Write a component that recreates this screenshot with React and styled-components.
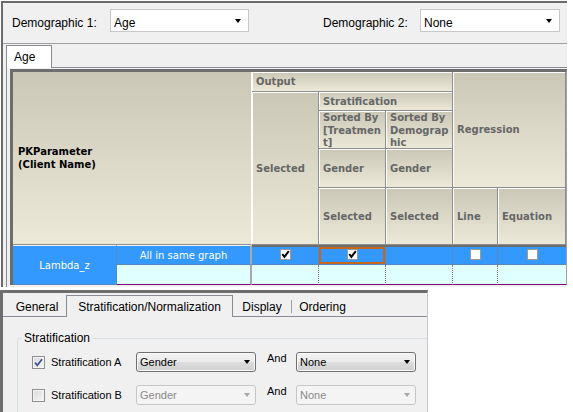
import React from 'react';
import styled, { createGlobalStyle } from 'styled-components';

const GlobalStyle = createGlobalStyle`
  html, body {
    margin: 0;
    padding: 0;
    background: #fff;
  }
  body {
    font-family: "Liberation Sans", Arial, sans-serif;
    font-size: 12px;
    color: #000;
  }
  * {
    box-sizing: border-box;
  }
`;

const Screen = styled.div`
  width: 573px;
  height: 412px;
  overflow: hidden;
  background: #fff;
`;

/* ---------- upper window ---------- */

const UpperWindow = styled.div`
  margin: 1px 0 0 1px;
  width: 566px;
  height: 286px;
  overflow: hidden;
  background: #f0f0f0;
  border-top: 2px solid #6b6b6b;
  border-left: 2px solid #6b6b6b;
  display: flex;
  flex-direction: column;
`;

const TopBar = styled.div`
  flex: none;
  height: 41px;
  display: flex;
  align-items: flex-start;
  padding: 6px 0 0 9px;
  border-bottom: 1px solid #a0a0a0;
`;

const FieldLabel = styled.div`
  width: ${p => p.w}px;
  margin-left: ${p => p.gap || 0}px;
  height: 23px;
  padding-top: 4px;
  display: flex;
  align-items: center;
  white-space: nowrap;
`;

const Combo = styled.div`
  width: ${p => p.w}px;
  height: 23px;
  background: #fff;
  border: 1px solid #c8c8c8;
  display: flex;
  align-items: center;
  padding: 4px 0 0 3px;
`;

const Arrow = styled.span`
  margin-left: auto;
  margin-right: ${p => p.right || 6}px;
  margin-top: ${p => p.lift || 0}px;
  width: 0;
  height: 0;
  border-left: 3.5px solid transparent;
  border-right: 3.5px solid transparent;
  border-top: 4px solid ${p => p.color || '#000'};
`;

const TabStrip = styled.div`
  flex: none;
  display: flex;
  margin: 1px 0 0 3px;
  height: 23px;
`;

const PageTab = styled.div`
  width: 46px;
  height: 23px;
  background: #fff;
  border: 1px solid #898c95;
  border-bottom: none;
  padding: 4px 0 0 7px;
  line-height: 14px;
`;

const StripRest = styled.div`
  flex: 1;
  border-bottom: 1px solid #898c95;
`;

const TabPage = styled.div`
  flex: 1;
  margin-left: 3px;
  border-left: 1px solid #898c95;
  padding: 1px 0 0 3px;
`;

const Grid = styled.div`
  width: 557px;
  display: grid;
  grid-template-columns: 104px 135px 67px 67px 67px 45px 68px;
  grid-template-rows: 20px 19px 38px 39px 57px 20px 20px;
  border-top: 3px solid #6d6d6d;
  border-left: 3px solid #6d6d6d;
  border-right: 1px solid #a0a0a0;
  background: #fff;
  font-family: "DejaVu Sans", Verdana, sans-serif;
  font-size: 10px;
`;

const Head = styled.div`
  grid-column: ${p => p.c};
  grid-row: ${p => p.r};
  background: linear-gradient(#cac7b7, #ece9d9);
  border-right: 1px solid ${p => (p.main ? '#fff' : '#8e8e8e')};
  border-bottom: 1px solid #8e8e8e;
  box-shadow: ${p => (p.main ? 'none' : 'inset 1px 1px 0 #fff')};
  display: flex;
  align-items: ${p => (p.top ? 'flex-start' : 'center')};
  padding: ${p => (p.top ? 1 : 2)}px 2px 0 ${p => (p.main ? 5 : 4)}px;
  font-weight: bold;
  color: ${p => (p.main ? '#000' : '#666')};
  line-height: 12.7px;
  white-space: nowrap;
`;

const Cell = styled.div`
  grid-column: ${p => p.c};
  grid-row: ${p => p.r};
  background: ${p => (p.alt ? '#e0ffff' : '#3399ff')};
  color: #fff;
  display: flex;
  align-items: center;
  justify-content: center;
  white-space: nowrap;
  border-top: ${p =>
    p.top === 'dark' ? '2px solid #6d6d6d' : p.top === 'light' ? '1px solid #f4f4f4' : 'none'};
  border-bottom: ${p => (p.purple ? '1px solid #800080' : '1px dotted #7a7a7a')};
  border-right: ${p =>
    p.edge === 'solid' ? '2px solid #a8a8a8' : p.edge === 'none' ? 'none' : '1px dotted #7a7a7a'};
  box-shadow: ${p => (p.focus ? 'inset 0 0 0 2px #c6671a' : 'none')};
`;

const GridCheck = styled.span`
  width: 11px;
  height: 11px;
  margin-top: -2px;
  background: #fff;
  border: 1px solid #9a9a9a;
  display: flex;
  align-items: center;
  justify-content: center;
`;

/* ---------- lower window ---------- */

const LowerWindow = styled.div`
  margin-top: 3px;
  width: 428px;
  height: 122px;
  overflow: hidden;
  background: #f0f0f0;
  border-top: 3px solid #6d6d6d;
  border-left: 3px solid #6d6d6d;
  border-right: 1px solid #c8c8c8;
`;

const LowerStrip = styled.div`
  display: flex;
  align-items: flex-end;
  height: 24px;
  padding-left: 5px;
  box-shadow: inset 0 -1px 0 #898c95;
`;

const LowerTab = styled.div`
  width: ${p => p.w}px;
  height: 22px;
  display: flex;
  align-items: center;
  justify-content: center;
  white-space: nowrap;
  background: ${p => (p.active ? '#f0f0f0' : 'transparent')};
  border: 1px solid ${p => (p.active ? '#898c95' : 'transparent')};
  border-bottom: none;
`;

const TabSep = styled.span`
  align-self: flex-start;
  margin-top: 7px;
  width: 1px;
  height: 13px;
  background: #a0a0a0;
`;

const Group = styled.fieldset`
  margin: 14px 0 0 14px;
  padding: 0 0 20px 4px;
  width: 440px;
  border: 1px solid #d5dfe5;
  border-radius: 3px;
  display: flex;
  flex-direction: column;
  gap: 13px;
`;

const GroupLabel = styled.legend`
  padding: 0 2px;
  font-size: 12px;
  line-height: 14px;
`;

const FieldRow = styled.div`
  display: flex;
  align-items: center;
  height: 20px;
  margin-left: 10px;
  font-size: 11px;
  &:first-of-type {
    margin-top: 7px;
  }
`;

const WinCheck = styled.span`
  width: 13px;
  height: 13px;
  flex: none;
  border: 1px solid #8e8f8f;
  background: linear-gradient(135deg, #d9d9d9, #f7f7f7);
  box-shadow: inset 0 0 0 1px #f4f4f4;
  display: flex;
  align-items: center;
  justify-content: center;
`;

const RowLabel = styled.span`
  width: 85px;
  margin-left: 6px;
  white-space: nowrap;
`;

const DropList = styled.div`
  width: 120px;
  height: 20px;
  flex: none;
  border: 1px solid ${p => (p.disabled ? '#c3c7ca' : '#707070')};
  border-radius: 3px;
  background: ${p =>
    p.disabled
      ? '#f4f4f4'
      : 'linear-gradient(#f2f2f2 0%, #ebebeb 50%, #dddddd 51%, #cfcfcf 100%)'};
  box-shadow: ${p => (p.disabled ? 'none' : 'inset 0 0 0 1px #fbfbfb')};
  color: ${p => (p.disabled ? '#8b8b8b' : '#000')};
  display: flex;
  align-items: center;
  padding-left: 3px;
  font-size: 11px;
`;

const AndText = styled.span`
  align-self: flex-start;
  width: 29px;
  margin-left: 11px;
  line-height: 13px;
`;

const Tick = () => (
  <svg width="9" height="9" viewBox="0 0 9 9">
    <polyline points="1.3,4.2 3.4,6.8 7.8,1.2" fill="none" stroke="#000" strokeWidth="2" />
  </svg>
);

const WinTick = () => (
  <svg width="11" height="11" viewBox="0 0 11 11">
    <polyline points="2,5.5 4.3,8.3 9,2.3" fill="none" stroke="#3d5493" strokeWidth="1.7" />
  </svg>
);

const StratRow = ({ label, checked, disabled }) => (
  <FieldRow>
    <WinCheck>{checked && <WinTick />}</WinCheck>
    <RowLabel>{label}</RowLabel>
    <DropList disabled={disabled}>
      Gender
      <Arrow right={5} color={disabled ? '#a8a8a8' : '#000'} />
    </DropList>
    <AndText>And</AndText>
    <DropList disabled={disabled}>
      None
      <Arrow right={5} color={disabled ? '#a8a8a8' : '#000'} />
    </DropList>
  </FieldRow>
);

const App = () => (
  <>
    <GlobalStyle />
    <Screen>
      <UpperWindow>
        <TopBar>
          <FieldLabel w={98}>Demographic 1:</FieldLabel>
          <Combo w={139}>
            Age
            <Arrow right={7} lift={-3} />
          </Combo>
          <FieldLabel w={97} gap={74}>Demographic 2:</FieldLabel>
          <Combo w={140}>
            None
            <Arrow right={7} lift={-3} />
          </Combo>
        </TopBar>

        <TabStrip>
          <PageTab>Age</PageTab>
          <StripRest />
        </TabStrip>

        <TabPage>
          <Grid>
            <Head c="1 / 3" r="1 / 6" main>
              PKParameter
              <br />
              (Client Name)
            </Head>
            <Head c="3 / 6" r="1">Output</Head>
            <Head c="6 / 8" r="1 / 5">Regression</Head>
            <Head c="3" r="2 / 6">Selected</Head>
            <Head c="4 / 6" r="2">Stratification</Head>
            <Head c="4" r="3" top>
              <span>
                Sorted By
                <br />
                [Treatmen
                <br />
                t]
              </span>
            </Head>
            <Head c="5" r="3" top>
              <span>
                Sorted By
                <br />
                Demograp
                <br />
                hic
              </span>
            </Head>
            <Head c="4" r="4">Gender</Head>
            <Head c="5" r="4">Gender</Head>
            <Head c="4" r="5">Selected</Head>
            <Head c="5" r="5">Selected</Head>
            <Head c="6" r="5">Line</Head>
            <Head c="7" r="5">Equation</Head>

            <Cell c="1" r="6 / 8" top="light">Lambda_z</Cell>
            <Cell c="2" r="6" top="light" edge="solid">All in same graph</Cell>
            <Cell c="3" r="6" top="dark">
              <GridCheck><Tick /></GridCheck>
            </Cell>
            <Cell c="4" r="6" top="dark" focus>
              <GridCheck><Tick /></GridCheck>
            </Cell>
            <Cell c="5" r="6" top="dark" />
            <Cell c="6" r="6" top="dark">
              <GridCheck />
            </Cell>
            <Cell c="7" r="6" top="dark" edge="none">
              <GridCheck />
            </Cell>

            <Cell c="2" r="7" alt purple edge="solid" />
            <Cell c="3" r="7" alt purple />
            <Cell c="4" r="7" alt purple />
            <Cell c="5" r="7" alt purple />
            <Cell c="6" r="7" alt purple />
            <Cell c="7" r="7" alt purple edge="none" />
          </Grid>
        </TabPage>
      </UpperWindow>

      <LowerWindow>
        <LowerStrip>
          <LowerTab w={58}>General</LowerTab>
          <LowerTab w={167} active>Stratification/Normalization</LowerTab>
          <LowerTab w={58}>Display</LowerTab>
          <TabSep />
          <LowerTab w={61}>Ordering</LowerTab>
        </LowerStrip>

        <Group>
          <GroupLabel>Stratification</GroupLabel>
          <StratRow label="Stratification A" checked />
          <StratRow label="Stratification B" disabled />
        </Group>
      </LowerWindow>
    </Screen>
  </>
);

export default App;
